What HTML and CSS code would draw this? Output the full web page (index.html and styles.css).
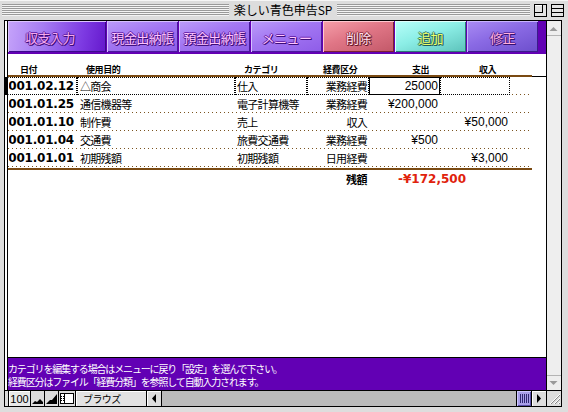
FILE: index.html
```html
<!DOCTYPE html>
<html lang="ja">
<head>
<meta charset="utf-8">
<title>楽しい青色申告SP</title>
<link rel="stylesheet" href="styles.css">
</head>
<body>
<div class="window">
  <div class="titlebar">
    <div class="stripes s-left"></div>
    <div class="title">楽しい青色申告SP</div>
    <div class="stripes s-right"></div>
    <div class="tbox">
      <svg width="13" height="13" viewBox="0 0 13 13"><rect x="0.5" y="0.5" width="12" height="12" fill="#e4e4e4" stroke="#000"/><rect x="0.5" y="0.5" width="8" height="8" fill="#e4e4e4" stroke="#000"/><line x1="1" y1="1.5" x2="8" y2="1.5" stroke="#fff"/></svg>
    </div>
    <div class="tbox">
      <svg width="13" height="13" viewBox="0 0 13 13"><rect x="0.5" y="0.5" width="12" height="12" fill="#e4e4e4" stroke="#000"/><line x1="1" y1="4.5" x2="12" y2="4.5" stroke="#000"/><line x1="1" y1="8.5" x2="12" y2="8.5" stroke="#000"/></svg>
    </div>
  </div>

  <div class="frame">
    <div class="upper">
      <div class="gutter"><div class="indicator"></div></div>

      <div class="content">
        <div class="toolbar">
          <div class="btn btn-main">収支入力</div>
          <div class="btn btn-lav">現金出納帳</div>
          <div class="btn btn-lav">預金出納帳</div>
          <div class="btn btn-lav">メニュー</div>
          <div class="btn btn-red">削除</div>
          <div class="btn btn-cyan">追加</div>
          <div class="btn btn-violet">修正</div>
        </div>

        <div class="sheet">
          <div class="thead">
            <div class="hrow cols">
              <div class="h h-date">日付</div>
              <div class="h h-purpose">使用目的</div>
              <div class="h h-cat">カテゴリ</div>
              <div class="h h-type">経費区分</div>
              <div class="h h-exp">支出</div>
              <div class="h h-inc">収入</div>
              <div class="h"></div>
            </div>
            <div class="hline"></div>
          </div>

          <div class="rows">
            <div class="row cols active">
              <div class="c date"><span>2001.02.12</span></div>
              <div class="c purpose">△商会</div>
              <div class="c cat">仕入</div>
              <div class="c type">業務経費</div>
              <div class="c exp money focus">25000</div>
              <div class="c inc money"></div>
              <div class="c tail"></div>
            </div>
            <div class="row cols">
              <div class="c date"><span>2001.01.25</span></div>
              <div class="c purpose">通信機器等</div>
              <div class="c cat">電子計算機等</div>
              <div class="c type">業務経費</div>
              <div class="c exp money">¥200,000</div>
              <div class="c inc money"></div>
              <div class="c tail"></div>
            </div>
            <div class="row cols">
              <div class="c date"><span>2001.01.10</span></div>
              <div class="c purpose">制作費</div>
              <div class="c cat">売上</div>
              <div class="c type">収入</div>
              <div class="c exp money"></div>
              <div class="c inc money">¥50,000</div>
              <div class="c tail"></div>
            </div>
            <div class="row cols">
              <div class="c date"><span>2001.01.04</span></div>
              <div class="c purpose">交通費</div>
              <div class="c cat">旅費交通費</div>
              <div class="c type">業務経費</div>
              <div class="c exp money">¥500</div>
              <div class="c inc money"></div>
              <div class="c tail"></div>
            </div>
            <div class="row cols">
              <div class="c date"><span>2001.01.01</span></div>
              <div class="c purpose">初期残額</div>
              <div class="c cat">初期残額</div>
              <div class="c type">日用経費</div>
              <div class="c exp money"></div>
              <div class="c inc money">¥3,000</div>
              <div class="c tail"></div>
            </div>
          </div>

          <div class="summary cols">
            <div class="sum-label">残額</div>
            <div class="sum-value">-¥172,500</div>
          </div>
        </div>

        <div class="footer">
          <div class="fline">カテゴリを編集する場合はメニューに戻り「設定」を選んで下さい。</div>
          <div class="fline">経費区分はファイル「経費分類」を参照して自動入力されます。</div>
        </div>
      </div>

      <div class="vscroll">
        <div class="varrow up">
          <svg width="14" height="14" viewBox="0 0 14 14"><polygon points="2.5,10 6.5,6 10.5,10" fill="#9a9a9a"/></svg>
        </div>
        <div class="vtrack"></div>
        <div class="varrow down">
          <svg width="14" height="14" viewBox="0 0 14 14"><polygon points="2.5,5 10.5,5 6.5,9" fill="#9a9a9a"/></svg>
        </div>
      </div>
    </div>

    <div class="statusbar">
      <div class="sb zoomlvl">100</div>
      <div class="sb icon">
        <svg width="13" height="15" viewBox="0 0 13 15"><polygon points="1,13 4,10 6,11 9,8 12,11 12,13" fill="#000"/></svg>
      </div>
      <div class="sb icon">
        <svg width="13" height="15" viewBox="0 0 13 15"><polygon points="1,13 5,9 7,9 12,3 12,13" fill="#000"/></svg>
      </div>
      <div class="sb icon layout">
        <svg width="16" height="15" viewBox="0 0 16 15"><rect x="1.5" y="2.5" width="13" height="10" fill="#fff" stroke="#000"/><line x1="5.5" y1="3" x2="5.5" y2="12" stroke="#000"/><line x1="2" y1="5.5" x2="5" y2="5.5" stroke="#000" stroke-dasharray="1 1"/><line x1="2" y1="7.5" x2="5" y2="7.5" stroke="#000" stroke-dasharray="1 1"/><line x1="2" y1="9.5" x2="5" y2="9.5" stroke="#000" stroke-dasharray="1 1"/></svg>
      </div>
      <div class="sb mode">ブラウズ</div>
      <div class="sb arrow">
        <svg width="14" height="15" viewBox="0 0 14 15"><polygon points="9,3 5,7.5 9,12" fill="#000"/></svg>
      </div>
      <div class="sb htrack"></div>
      <div class="sb thumb">
        <svg width="14" height="15" viewBox="0 0 14 15"><g stroke="#2e2670" stroke-width="1"><line x1="3.5" y1="3" x2="3.5" y2="12"/><line x1="5.5" y1="3" x2="5.5" y2="12"/><line x1="7.5" y1="3" x2="7.5" y2="12"/><line x1="9.5" y1="3" x2="9.5" y2="12"/><line x1="11.5" y1="3" x2="11.5" y2="12"/></g></svg>
      </div>
      <div class="sb arrow">
        <svg width="14" height="15" viewBox="0 0 14 15"><polygon points="5,3 9,7.5 5,12" fill="#000"/></svg>
      </div>
      <div class="sb grip">
        <svg width="14" height="15" viewBox="0 0 14 15"><g stroke-width="1"><line x1="13" y1="3" x2="3" y2="13" stroke="#fff"/><line x1="13" y1="4" x2="4" y2="13" stroke="#8a8a8a"/><line x1="13" y1="7" x2="7" y2="13" stroke="#fff"/><line x1="13" y1="8" x2="8" y2="13" stroke="#8a8a8a"/><line x1="13" y1="11" x2="11" y2="13" stroke="#fff"/><line x1="13" y1="12" x2="12" y2="13" stroke="#8a8a8a"/></g></svg>
      </div>
    </div>
  </div>
</div>
</body>
</html>
```

FILE: styles.css
```css
* { box-sizing: border-box; }

html, body {
  margin: 0;
  padding: 0;
}

body {
  width: 568px;
  height: 412px;
  overflow: hidden;
  background: #dddddd;
  font-family: "Noto Sans CJK JP", sans-serif;
  color: #000;
}

.window {
  width: 568px;
  height: 412px;
  display: flex;
  flex-direction: column;
  padding: 0 6px 5px 4px;
  background: #dddddd;
}

/* ---------- title bar ---------- */
.titlebar {
  height: 20px;
  margin: 0 -6px 0 -4px;
  padding: 3px 0 0 2px;
  display: flex;
  align-items: flex-start;
  background: #dddddd;
  border-top: 1px solid #f6f6f6;
}

.stripes {
  height: 12px;
  background: repeating-linear-gradient(to bottom, #9a9a9a 0 1px, #f4f4f4 1px 2px);
}

.s-left { width: 227px; }
.s-right { width: 193px; }

.title {
  width: 108px;
  height: 14px;
  margin-top: -1px;
  line-height: 14px;
  font-size: 12px;
  text-align: center;
  white-space: nowrap;
}

.tbox {
  width: 13px;
  height: 13px;
  margin-left: 4px;
  display: flex;
}

/* ---------- frame ---------- */
.frame {
  flex: 1;
  display: flex;
  flex-direction: column;
  border: 1px solid #000;
  background: #dddddd;
}

.upper {
  height: 370px;
  display: flex;
  border-bottom: 1px solid #000;
}

.gutter {
  width: 3px;
  background: #fff;
  border-right: 1px solid #000;
}

.indicator {
  margin-top: 56px;
  height: 18px;
  background: #000;
}

.content {
  width: 539px;
  display: flex;
  flex-direction: column;
  border-right: 1px solid #000;
  overflow: hidden;
}

/* ---------- toolbar ---------- */
.toolbar {
  height: 33px;
  flex: none;
  display: flex;
  gap: 1px;
  padding-bottom: 2px;
  background: #6200b4;
}

.btn {
  width: 71px;
  height: 31px;
  display: flex;
  align-items: center;
  justify-content: center;
  font-size: 13px;
  letter-spacing: -0.6px;
  white-space: nowrap;
  padding-top: 1px;
}

.btn-main {
  width: 98px;
  padding-right: 14px;
  background: linear-gradient(100deg, #c6a4fa 0%, #a57cf2 35%, #7d3ae2 75%, #6418cc 100%);
  box-shadow: inset 1px 1px 0 #dcc4ff, inset -1px -1px 0 #3c0a8c;
  color: #f4a8ee;
  text-shadow: 1px 1px 0 #3a0c78, -1px 0 0 #6a2ab0, 0 -1px 0 #6a2ab0, 1px 0 0 #4a1890, 0 1px 0 #4a1890;
}

.btn-lav {
  background: linear-gradient(160deg, #bc9cfa 0%, #a276f2 45%, #8e5ce8 100%);
  box-shadow: inset 1px 1px 0 #d6c0ff, inset -1px -1px 0 #4a1a9c;
  color: #ffc4ff;
  text-shadow: 1px 1px 0 #3a0c78, -1px 0 0 #6a2ab0, 0 -1px 0 #6a2ab0, 1px 0 0 #4a1890, 0 1px 0 #4a1890;
}

.btn-red {
  background: linear-gradient(160deg, #f6a0aa 0%, #e07686 45%, #c25868 100%);
  box-shadow: inset 1px 1px 0 #ffc8d0, inset -1px -1px 0 #7a2030;
  color: #ffe0ee;
  text-shadow: 1px 1px 0 #6a1828, -1px 0 0 #a03848, 0 -1px 0 #a03848, 1px 0 0 #802838, 0 1px 0 #802838;
}

.btn-cyan {
  background: linear-gradient(160deg, #b8fffa 0%, #8ceee6 45%, #5cc2ba 100%);
  box-shadow: inset 1px 1px 0 #e0fffc, inset -1px -1px 0 #2a7a74;
  color: #eeff6a;
  text-shadow: 1px 1px 0 #205a56, -1px 0 0 #3a8a84, 0 -1px 0 #3a8a84, 1px 0 0 #2a6e6a, 0 1px 0 #2a6e6a;
}

.btn-violet {
  background: linear-gradient(160deg, #aa8cf4 0%, #8a6ae4 45%, #6c4ecc 100%);
  box-shadow: inset 1px 1px 0 #c8b4ff, inset -1px -1px 0 #3a1c8a;
  color: #ffaedc;
  text-shadow: 1px 1px 0 #34106e, -1px 0 0 #5a30a8, 0 -1px 0 #5a30a8, 1px 0 0 #462090, 0 1px 0 #462090;
}

/* ---------- sheet ---------- */
.sheet {
  flex: 1;
  background: #fff;
}

.cols {
  display: grid;
  grid-template-columns: 69px 158px 72px 62px 71px 70px 22px;
  width: 524px;
}

.thead {
  display: flex;
}

.hrow {
  height: 23px;
  padding-top: 10px;
  border-bottom: 2px solid #7a4a12;
  font-size: 9px;
  font-weight: 700;
  line-height: 11px;
  letter-spacing: -0.4px;
}

.h { white-space: nowrap; }
.h-date { padding-left: 12px; }
.h-purpose { padding-left: 9px; }
.h-cat { padding-left: 9px; }
.h-type { padding-left: 16px; }
.h-exp { padding-left: 43px; }
.h-inc { padding-left: 39px; }

.hline {
  flex: 1;
  height: 23px;
  border-bottom: 1px solid #000;
}

.row {
  height: 18px;
  background-image: repeating-linear-gradient(to right, #7b5420 0 1px, transparent 1px 4px);
  background-size: 100% 1px;
  background-position: left bottom;
  background-repeat: no-repeat;
}

.c {
  display: flex;
  align-items: center;
  overflow: hidden;
  white-space: nowrap;
  border: 1px solid transparent;
  border-bottom-width: 2px;
  font-size: 11px;
  letter-spacing: -0.7px;
}

.date {
  justify-content: flex-end;
  padding-right: 2px;
  font-family: "DejaVu Sans", sans-serif;
  font-weight: 700;
  font-size: 12px;
  letter-spacing: -0.2px;
}

.purpose { padding-left: 2px; }
.cat { padding-left: 1px; }
.type { justify-content: flex-end; padding-right: 1px; }
.exp { justify-content: flex-end; padding-right: 1px; }
.inc { justify-content: flex-end; padding-right: 1px; }

.money {
  font-family: "Liberation Sans", sans-serif;
  font-size: 12px;
  letter-spacing: 0;
}

.active .c {
  border: 1px dotted #000;
  background: #fff;
}

.active .date { border-left-color: transparent; }

.active .tail {
  border-color: transparent;
  background: transparent;
}

.active .focus {
  border: 1px solid #000;
}

.summary {
  margin-top: 1px;
  height: 19px;
  border-top: 2px solid #7a4a12;
  align-items: center;
}

.sum-label {
  grid-column: 4;
  text-align: right;
  padding-right: 2px;
  font-size: 11px;
  font-weight: 700;
  letter-spacing: -0.5px;
}

.sum-value {
  grid-column: 5 / span 2;
  padding-left: 29px;
  font-family: "DejaVu Sans", sans-serif;
  font-weight: 700;
  font-size: 12px;
  color: #e0220c;
  white-space: nowrap;
}

/* ---------- footer ---------- */
.footer {
  flex: none;
  height: 33px;
  border-top: 1px solid #000;
  background: #6200b4;
  color: #fff;
  padding-top: 4px;
  font-size: 10px;
  letter-spacing: -1.15px;
  white-space: nowrap;
}

.fline {
  height: 13px;
  line-height: 13px;
}

/* ---------- vertical scrollbar ---------- */
.vscroll {
  width: 14px;
  display: flex;
  flex-direction: column;
  background: #eeeeee;
}

.varrow {
  height: 15px;
  display: flex;
}

.varrow.up { border-bottom: 1px solid #b4b4b4; }
.varrow.down { border-top: 1px solid #b4b4b4; }

.vtrack { flex: 1; }

/* ---------- status bar ---------- */
.statusbar {
  height: 15px;
  display: flex;
  padding-left: 3px;
  background: #dddddd;
}

.sb {
  height: 15px;
  border-left: 1px solid #000;
  display: flex;
  align-items: center;
  flex: none;
}

.zoomlvl {
  width: 22px;
  justify-content: center;
  font-family: "Liberation Sans", sans-serif;
  font-size: 11px;
  background: #e8e8e8;
  box-shadow: inset 1px 1px 0 #fff;
}

.icon { width: 14px; background: #dddddd; }
.layout { width: 17px; }

.mode {
  width: 71px;
  padding-left: 7px;
  font-size: 10px;
  letter-spacing: -0.6px;
  background: #e2e2e2;
  box-shadow: inset 1px 1px 0 #fff;
}

.arrow { width: 15px; background: #dddddd; box-shadow: inset 1px 1px 0 #fff; }

.htrack {
  flex: 1;
  background: #bbbbbb;
}

.thumb {
  width: 15px;
  background: #a89ee8;
  box-shadow: inset 1px 1px 0 #cdc6ff, inset -1px -1px 0 #5a50a8;
}

.grip { width: 15px; background: #dddddd; }
```
